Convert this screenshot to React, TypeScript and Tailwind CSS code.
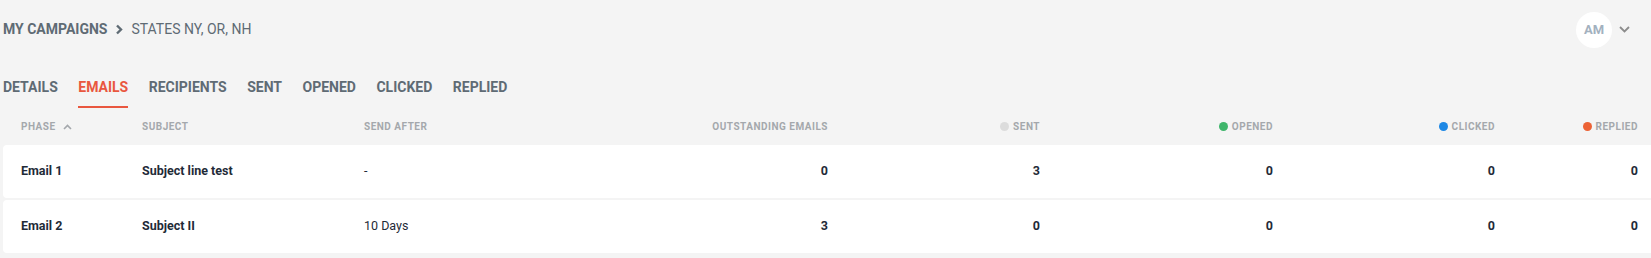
import React from "react";

const tabs = ["DETAILS", "EMAILS", "RECIPIENTS", "SENT", "OPENED", "CLICKED", "REPLIED"];

const cols = "grid grid-cols-[121px_222px_200px_264px_212px_233px_222px_143px]";

function Dot({ color }: { color: string }) {
  return <span className={`inline-block w-[9px] h-[9px] rounded-full ${color}`} />;
}

const rows = [
  { phase: "Email 1", subject: "Subject line test", after: "-", out: 0, sent: 3, opened: 0, clicked: 0, replied: 0 },
  { phase: "Email 2", subject: "Subject II", after: "10 Days", out: 3, sent: 0, opened: 0, clicked: 0, replied: 0 },
];

export default function App() {
  return (
    <div className="w-[1651px] h-[258px] bg-[#f4f4f4] font-['Roboto',sans-serif] overflow-hidden">
      <div className="h-[59px] flex items-center justify-between pl-[3px] pr-[21px]">
        <div className="flex items-center text-[14px] text-[#5f6b74]">
          <span className="font-bold">MY CAMPAIGNS</span>
          <svg className="ml-[8px] mr-[8px]" width="8" height="11" viewBox="0 0 8 11" fill="none">
            <polyline points="2,1.5 6,5.5 2,9.5" stroke="#5f6b74" strokeWidth="2.4" />
          </svg>
          <span>STATES NY, OR, NH</span>
        </div>
        <div className="flex items-center gap-[7px]">
          <div className="w-[36px] h-[36px] rounded-full bg-white flex items-center justify-center text-[13px] font-bold text-[#a3b1bf]">
            AM
          </div>
          <svg width="11" height="7" viewBox="0 0 11 7" fill="none">
            <polyline points="1,1 5.5,5.5 10,1" stroke="#8c8c8c" strokeWidth="1.8" />
          </svg>
        </div>
      </div>

      <div className="flex gap-[20.5px] pl-[3px] h-[49px]">
        {tabs.map((t) => (
          <div
            key={t}
            className={`pt-[18px] pb-[9px] text-[14px] leading-[20px] font-bold border-b-2 ${
              t === "EMAILS" ? "text-[#e9573f] border-[#e9573f]" : "text-[#5f6b74] border-transparent"
            }`}
          >
            {t}
          </div>
        ))}
      </div>

      <div className="ml-[3px]">
        <div className={`${cols} h-[37px] items-center pl-[18px] pr-[13px] text-[10px] font-bold tracking-[0.5px] text-[#a4a8ac]`}>
          <div className="flex items-center gap-[7px]">
            PHASE
            <svg width="9" height="6" viewBox="0 0 9 6" fill="none">
              <polyline points="1,5 4.5,1.5 8,5" stroke="#a4a8ac" strokeWidth="1.6" />
            </svg>
          </div>
          <div>SUBJECT</div>
          <div>SEND AFTER</div>
          <div className="text-right">OUTSTANDING EMAILS</div>
          <div className="flex items-center justify-end gap-[4px]">
            <Dot color="bg-[#dcdcdc]" />
            SENT
          </div>
          <div className="flex items-center justify-end gap-[4px]">
            <Dot color="bg-[#3fb56b]" />
            OPENED
          </div>
          <div className="flex items-center justify-end gap-[4px]">
            <Dot color="bg-[#1e88e5]" />
            CLICKED
          </div>
          <div className="flex items-center justify-end gap-[4px]">
            <Dot color="bg-[#ec6235]" />
            REPLIED
          </div>
        </div>

        <div className="flex flex-col gap-[2px]">
          {rows.map((r) => (
            <div
              key={r.phase}
              className={`${cols} h-[53px] items-center pl-[18px] pr-[13px] bg-white rounded-l-[4px] text-[12.5px] text-[#1f2b38]`}
            >
              <div className="font-bold">{r.phase}</div>
              <div className="font-bold">{r.subject}</div>
              <div>{r.after}</div>
              <div className="text-right font-bold">{r.out}</div>
              <div className="text-right font-bold">{r.sent}</div>
              <div className="text-right font-bold">{r.opened}</div>
              <div className="text-right font-bold">{r.clicked}</div>
              <div className="text-right font-bold">{r.replied}</div>
            </div>
          ))}
        </div>
      </div>
    </div>
  );
}
